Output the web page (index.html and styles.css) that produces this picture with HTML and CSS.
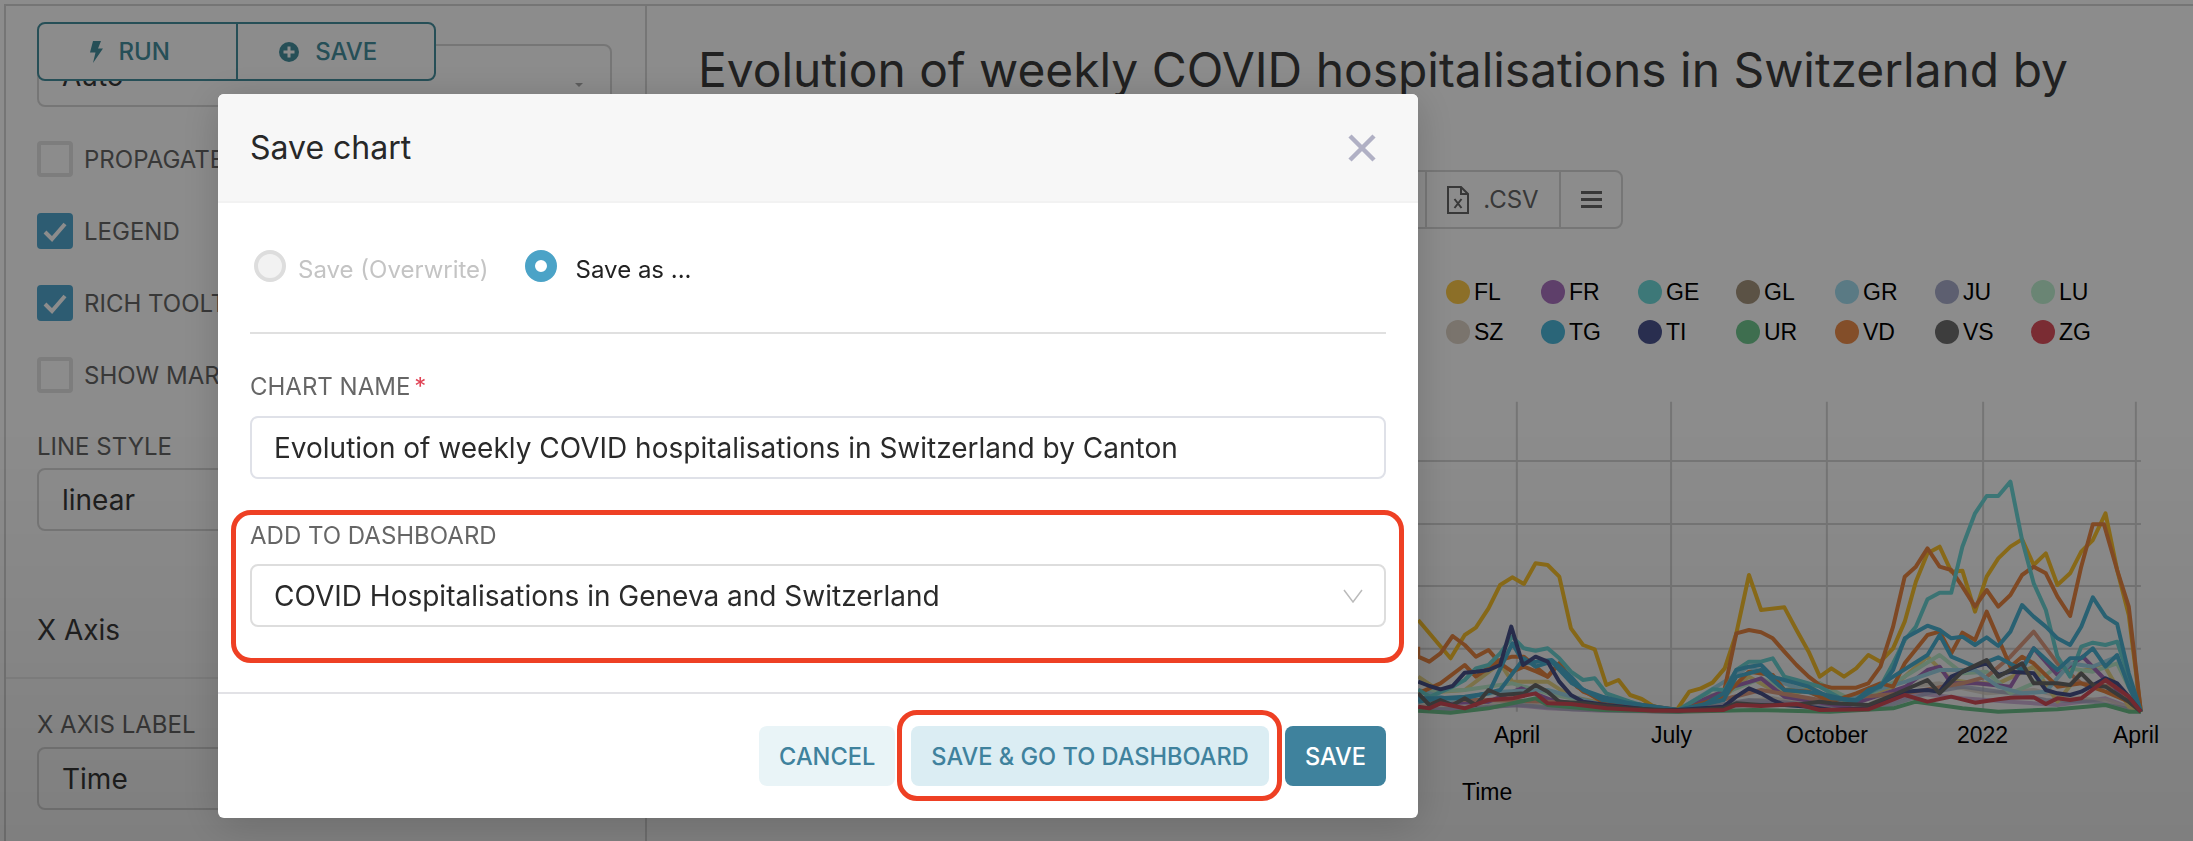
FILE: index.html
```html
<!DOCTYPE html>
<html lang="en">
<head>
    <meta charset="UTF-8">
    <meta name="viewport" content="width=device-width, initial-scale=1.0">
    <title>Save chart</title>
    <link rel="stylesheet" href="styles.css">
</head>
<body>
    <div class="page">
        <aside class="sidebar">
            <div class="run-bar">
                <button class="run-btn">
                    <svg class="bolt" width="13" height="22" viewBox="0 0 13 22"><path d="M3 0H11L8 7.500H13L3 22L5.500 11.500H0Z"/></svg>
                    RUN
                </button>
                <button class="run-btn">
                    <svg width="20" height="20" viewBox="0 0 20 20"><circle class="plus-disc" cx="10" cy="10" r="10"/><path class="plus-cross" d="M8.500 4.500h3v4h4v3h-4v4h-3v-4h-4v-3h4z"/></svg>
                    SAVE
                </button>
            </div>

            <div class="field field-under-bar">
                <span>Auto</span>
                <i class="caret"></i>
            </div>

            <div class="check-list">
                <div class="check-row"><i class="box"></i>PROPAGATE</div>
                <div class="check-row"><i class="box checked"><svg width="28" height="24" viewBox="0 0 28 24"><path d="M4 13L11 20L24 5"/></svg></i>LEGEND</div>
                <div class="check-row"><i class="box checked"><svg width="28" height="24" viewBox="0 0 28 24"><path d="M4 13L11 20L24 5"/></svg></i>RICH TOOLT</div>
                <div class="check-row"><i class="box"></i>SHOW MAR</div>
            </div>

            <div class="side-label side-label-line">LINE STYLE</div>
            <div class="field">linear</div>

            <h3 class="side-heading">X Axis</h3>
            <div class="panel-line"></div>

            <div class="side-label side-label-axis">X AXIS LABEL</div>
            <div class="field">Time</div>
        </aside>

        <main class="main">
            <h1 class="chart-title">Evolution of weekly COVID hospitalisations in Switzerland by Canton</h1>

            <div class="export-bar">
                <div class="export-cell export-hidden"></div>
                <div class="export-cell export-csv">
                    <svg width="22" height="28" viewBox="0 0 22 28"><path class="file-line" d="M1 1H14L21 8V27H1ZM14 1V8H21M7.500 13L14.500 22M14.500 13L7.500 22"/></svg>
                    .CSV
                </div>
                <div class="export-cell export-menu">
                    <i></i><i></i><i></i>
                </div>
            </div>

            <div class="legend">
                <div class="legend-item"><i class="dot" style="background:#ffcb49"></i>FL</div>
                <div class="legend-item"><i class="dot" style="background:#ab73c1"></i>FR</div>
                <div class="legend-item"><i class="dot" style="background:#6fdada"></i>GE</div>
                <div class="legend-item"><i class="dot" style="background:#a7957e"></i>GL</div>
                <div class="legend-item"><i class="dot" style="background:#a4def1"></i>GR</div>
                <div class="legend-item"><i class="dot" style="background:#a9aecc"></i>JU</div>
                <div class="legend-item"><i class="dot" style="background:#c1f3d3"></i>LU</div>
                <div class="legend-item"><i class="dot" style="background:#ded3c6"></i>SZ</div>
                <div class="legend-item"><i class="dot" style="background:#4eb8da"></i>TG</div>
                <div class="legend-item"><i class="dot" style="background:#4c5591"></i>TI</div>
                <div class="legend-item"><i class="dot" style="background:#72c891"></i>UR</div>
                <div class="legend-item"><i class="dot" style="background:#ee8e4c"></i>VD</div>
                <div class="legend-item"><i class="dot" style="background:#6f6f6f"></i>VS</div>
                <div class="legend-item"><i class="dot" style="background:#de505d"></i>ZG</div>
            </div>

            <svg class="chart" viewBox="0 0 1568 945" preserveAspectRatio="none">
                <g class="grid">
                    <path d="M231 5V935M536 5V935M844 5V935M1153 5V935M1455 5V935"/>
                    <path d="M0 183H1465M0 372H1465M0 558H1465M0 746H1465"/>
                </g>
                <g class="trace faint">
                    <polyline stroke="#c9a0d6" points="36,925 128,930 222,915 292,925 400,932 550,935 680,915 760,905 830,925 926,925 1020,880 1112,895 1207,905 1300,915 1395,895 1465,935"/>
                    <polyline stroke="#ded3c6" points="36,915 128,920 222,905 315,925 420,930 550,935 680,905 737,895 830,920 926,915 1000,860 1067,850 1160,880 1253,870 1325,895 1395,900 1465,935"/>
                    <polyline stroke="#a9aecc" points="36,930 128,925 240,915 340,928 550,935 690,900 780,910 860,925 950,925 1043,880 1112,860 1207,880 1277,900 1370,905 1465,935"/>
                </g>
                <g class="trace">
                    <polyline stroke="#f0dc8c" points="36,830 80,875 128,870 198,790 222,845 292,845 338,890 420,915 550,932 640,890 690,830 737,870 784,880 830,850 880,910 975,860 1043,770 1090,840 1137,850 1183,850 1253,800 1300,905 1347,815 1390,790 1441,920 1465,935"/>
                    <polyline stroke="#c1f3d3" points="36,875 128,870 222,850 292,880 400,915 550,930 595,890 640,880 714,835 760,870 830,850 900,905 998,830 1067,765 1112,820 1160,815 1207,880 1253,850 1300,800 1370,815 1418,790 1465,935"/>
                    <polyline stroke="#ab73c1" points="36,890 80,910 175,905 240,865 300,900 400,925 550,932 660,860 714,835 760,890 880,920 1000,860 1043,810 1067,800 1090,850 1140,850 1207,860 1253,745 1300,825 1350,770 1395,840 1441,900 1465,935"/>
                    <polyline stroke="#e8a488" points="36,900 175,900 292,905 550,933 714,870 830,900 1000,880 1112,850 1160,830 1207,770 1253,695 1300,790 1347,850 1418,860 1465,935"/>
                    <polyline stroke="#a4def1" points="36,870 100,900 198,875 292,870 400,915 550,930 690,800 760,850 860,905 1000,845 1067,810 1137,810 1183,860 1230,880 1277,875 1325,790 1370,800 1418,770 1465,935"/>
                    <polyline stroke="#ffc62e" points="36,660 100,775 128,705 150,683 175,625 198,555 222,532 245,552 268,490 292,495 315,530 338,685 362,735 385,748 408,855 432,840 455,885 478,897 500,918 525,928 548,928 572,875 595,865 618,848 642,805 665,700 690,525 714,630 760,622 784,690 808,755 830,830 853,805 878,830 902,805 926,765 950,785 975,745 998,665 1020,545 1043,460 1067,440 1090,515 1112,512 1137,635 1160,530 1183,475 1207,440 1230,418 1253,495 1277,460 1300,555 1325,520 1347,455 1370,420 1395,340 1418,510 1441,645 1465,935"/>
                    <polyline stroke="#f08a45" points="36,740 36,770 58,785 80,760 104,708 128,735 150,770 175,750 198,790 222,815 245,800 270,815 292,830 315,790 338,840 362,875 408,900 480,915 550,930 600,915 640,880 665,700 690,690 714,697 737,715 760,755 784,795 808,830 830,855 853,863 902,863 926,850 950,800 975,680 998,530 1020,500 1043,445 1067,500 1090,510 1112,560 1137,620 1160,570 1183,620 1207,585 1230,525 1253,500 1277,520 1300,590 1325,648 1347,500 1370,373 1392,373 1418,510 1441,620 1465,935"/>
                    <polyline stroke="#f08a45" points="36,880 80,850 128,795 150,830 198,780 222,770 245,770 292,830 315,790 350,860 400,905 480,920 550,932 640,890 690,815 737,825 760,870 808,875 853,905 902,880 950,850 975,860 998,790 1043,705 1067,695 1090,760 1112,698 1137,720 1160,635 1207,800 1230,770 1253,790 1300,860 1347,850 1395,875 1441,905 1465,935"/>
                    <polyline stroke="#6fdada" points="36,870 60,890 104,860 128,840 150,805 175,795 198,760 222,710 245,745 268,752 292,745 315,775 338,815 362,840 385,835 408,880 455,905 500,925 550,930 595,890 618,868 642,870 665,810 690,785 714,785 737,775 760,830 784,840 808,850 830,860 853,880 878,900 900,900 926,880 950,860 975,790 998,720 1020,680 1043,598 1067,578 1090,578 1112,440 1137,340 1160,288 1183,288 1207,245 1230,420 1253,550 1277,630 1300,770 1325,830 1347,740 1370,728 1395,735 1418,725 1441,830 1465,935"/>
                    <polyline stroke="#4eb8da" points="36,905 80,895 128,890 175,880 222,730 245,790 300,780 338,830 362,870 400,890 455,910 550,930 600,915 640,880 665,810 690,800 714,795 737,830 760,840 808,860 853,895 902,900 926,870 950,860 975,810 998,715 1043,677 1067,690 1090,715 1112,710 1137,735 1160,712 1183,738 1207,695 1230,615 1253,650 1277,680 1300,715 1325,735 1347,680 1370,592 1395,650 1418,672 1441,820 1465,935"/>
                    <polyline stroke="#4eb8da" points="36,895 128,895 198,870 245,775 268,800 300,785 340,850 400,900 550,930 640,900 665,830 714,810 760,870 830,880 900,905 975,830 1043,765 1067,705 1090,770 1137,800 1183,772 1230,810 1253,745 1300,810 1325,775 1347,775 1370,745 1395,800 1418,765 1441,860 1465,935"/>
                    <polyline stroke="#4c5591" points="36,845 58,858 80,868 104,858 128,818 150,815 175,810 198,795 220,680 243,795 268,770 292,785 315,845 338,885 362,905 408,915 500,930 550,930 640,920 665,890 690,865 714,880 737,900 760,915 808,920 853,930 926,925 975,890 998,875 1043,870 1067,875 1090,830 1137,800 1160,790 1183,825 1207,815 1253,820 1277,870 1300,880 1325,885 1347,875 1395,835 1418,850 1441,890 1465,935"/>
                    <polyline stroke="#72c891" points="36,932 100,938 175,925 268,895 292,915 400,930 550,935 700,930 850,935 975,925 1020,905 1112,925 1183,935 1300,928 1395,915 1441,935 1465,935"/>
                    <polyline stroke="#6f6f6f" points="36,880 58,915 80,900 104,915 128,895 150,915 175,870 198,885 245,880 268,855 292,875 315,905 362,910 450,925 550,932 640,925 665,910 714,915 780,915 830,905 853,910 926,915 975,885 1043,840 1067,880 1112,815 1160,780 1183,830 1230,790 1253,850 1300,850 1325,855 1347,820 1370,855 1395,860 1441,905 1465,935"/>
                    <polyline stroke="#de505d" points="36,920 58,925 80,910 128,925 175,900 222,895 268,880 292,910 338,912 408,925 500,932 550,932 640,930 665,915 714,918 784,912 830,930 926,928 998,885 1043,905 1090,890 1137,908 1183,898 1207,893 1253,892 1277,912 1300,895 1325,900 1347,895 1395,840 1441,890 1465,935"/>
                </g>
            </svg>

            <div class="axis-ticks">
                <span>April</span>
                <span>July</span>
                <span>October</span>
                <span>2022</span>
                <span>April</span>
            </div>
            <div class="axis-name">Time</div>
        </main>
    </div>

    <div class="overlay"></div>

    <div class="modal">
        <div class="modal-header">
            <h2>Save chart</h2>
            <svg class="modal-close" width="30" height="30" viewBox="0 0 30 30"><path d="M3 3L27 27M27 3L3 27"/></svg>
        </div>

        <div class="modal-body">
            <div class="radio-row">
                <label class="radio-label disabled"><i class="radio"></i>Save (Overwrite)</label>
                <label class="radio-label"><i class="radio on"></i>Save as ...</label>
            </div>
            <hr class="modal-line">

            <div class="form-label">CHART NAME<span class="required">*</span></div>
            <div class="form-input">Evolution of weekly COVID hospitalisations in Switzerland by Canton</div>

            <div class="form-group ringed">
                <div class="form-label">ADD TO DASHBOARD</div>
                <div class="form-input form-select">
                    COVID Hospitalisations in Geneva and Switzerland
                    <svg width="20" height="14" viewBox="0 0 20 14"><path d="M1 1L10 13L19 1"/></svg>
                </div>
            </div>
        </div>

        <div class="modal-footer">
            <button class="btn btn-cancel">CANCEL</button>
            <button class="btn btn-go ringed-btn">SAVE &amp; GO TO DASHBOARD</button>
            <button class="btn btn-save">SAVE</button>
        </div>
    </div>
</body>
</html>
```

FILE: styles.css
```css
* {
    box-sizing: border-box;
}

body {
    font-family: Inter, "Liberation Sans", sans-serif;
    background-color: #fff;
    margin: 0;
    height: 841px;
    overflow: hidden;
}

button {
    font-family: inherit;
}

.page {
    display: flex;
    height: 841px;
    margin: 4px 0 0 4px;
    border-top: 2px solid #d5d5d5;
    border-left: 2px solid #d5d5d5;
}

/* left panel */
.sidebar {
    flex: 0 0 641px;
    padding: 16px 33px 0 31px;
    border-right: 2px solid #d8d8d8;
}

.run-bar {
    position: relative;
    z-index: 1;
    display: flex;
    width: 399px;
    height: 59px;
    background-color: #fff;
    border: 2px solid #46909f;
    border-radius: 8px;
}

.run-btn {
    display: flex;
    align-items: center;
    justify-content: center;
    gap: 16px;
    flex: 1;
    padding: 0 15px 0 0;
    background: none;
    border: none;
    color: #46909f;
    font-size: 24px;
    font-weight: 500;
}

.run-btn + .run-btn {
    border-left: 2px solid #46909f;
}

.bolt path,
.plus-disc {
    fill: #46909f;
}

.plus-cross {
    fill: #fff;
}

.field {
    display: flex;
    align-items: center;
    height: 63px;
    padding-left: 23px;
    border: 2px solid #d8d8d8;
    border-radius: 8px;
    color: #383838;
    font-size: 28px;
}

.field-under-bar {
    position: relative;
    margin-top: -37px;
    padding-top: 0;
}

.caret {
    position: absolute;
    right: 27px;
    top: 37px;
    border-left: 4px solid transparent;
    border-right: 4px solid transparent;
    border-top: 4px solid #aaa;
}

.check-list {
    margin-top: 34px;
}

.check-row {
    display: flex;
    align-items: center;
    gap: 11px;
    height: 36px;
    margin-bottom: 36px;
    color: #666;
    font-size: 24px;
    white-space: nowrap;
}

.box {
    display: flex;
    flex: none;
    align-items: center;
    justify-content: center;
    width: 36px;
    height: 36px;
    border: 4px solid #e4e4e4;
    border-radius: 4px;
}

.box.checked {
    background-color: #53a8cf;
    border-color: #53a8cf;
}

.box path {
    fill: none;
    stroke: #fff;
    stroke-width: 4;
}

.side-label {
    height: 28px;
    line-height: 28px;
    color: #666;
    font-size: 24px;
}

.side-label-line {
    margin-top: 40px;
    margin-bottom: 7px;
}

.side-label-axis {
    margin-top: 32px;
    margin-bottom: 8px;
}

.side-heading {
    height: 40px;
    line-height: 40px;
    margin: 79px 0 27px;
    color: #3c3c3c;
    font-size: 28px;
    font-weight: 400;
}

.panel-line {
    height: 2px;
    margin: 0 -33px 0 -31px;
    background-color: #eee;
}

/* chart side */
.main {
    flex: 1;
    min-width: 0;
    padding: 34px 0 0 51px;
}

.chart-title {
    margin: 0;
    color: #3c3c3c;
    font-size: 47.900px;
    font-weight: 400;
    line-height: 60px;
}

.export-bar {
    display: flex;
    width: 323px;
    height: 59px;
    margin: 10px 0 0 602px;
    border: 2px solid #d8d8d8;
    border-radius: 8px;
    color: #666;
    font-size: 24px;
}

.export-cell {
    display: flex;
    align-items: center;
    justify-content: center;
    height: 100%;
}

.export-hidden {
    width: 123px;
}

.export-csv {
    gap: 14px;
    width: 136px;
    border-left: 2px solid #d8d8d8;
    border-right: 2px solid #d8d8d8;
}

.file-line {
    fill: none;
    stroke: #666;
    stroke-width: 2;
}

.export-menu {
    flex: 1;
    flex-direction: column;
    gap: 3.500px;
}

.export-menu i {
    width: 21px;
    height: 3.500px;
    background-color: #666;
}

.legend {
    display: grid;
    grid-template-columns: 95px 97px 98px 99px 100px 96px auto;
    grid-auto-rows: 40px;
    margin: 43px 0 0 748px;
    font-family: "Liberation Sans", sans-serif;
    font-size: 23px;
}

.legend-item {
    display: flex;
    align-items: center;
    gap: 4px;
    color: #000;
}

.dot {
    width: 24px;
    height: 24px;
    border-radius: 50%;
}

.chart {
    display: block;
    width: 793px;
    height: 315px;
    margin: 48px 0 0 702px;
}

.grid path {
    fill: none;
    stroke: #d6d6d6;
    stroke-width: 2px;
    vector-effect: non-scaling-stroke;
}

.trace polyline {
    fill: none;
    stroke-width: 4px;
    stroke-linejoin: round;
    vector-effect: non-scaling-stroke;
}

.trace.faint polyline {
    opacity: 0.7;
}

.axis-ticks {
    display: grid;
    grid-template-columns: 154px 155px 156px 155px 152px;
    height: 40px;
    margin-left: 742px;
    font-family: "Liberation Sans", sans-serif;
    font-size: 23px;
    line-height: 40px;
    text-align: center;
    color: #000;
}

.axis-name {
    height: 40px;
    margin: 17px 0 0 764px;
    font-family: "Liberation Sans", sans-serif;
    font-size: 23px;
    line-height: 40px;
    color: #000;
}

/* dialog */
.overlay {
    position: fixed;
    z-index: 2;
    inset: 0;
    background: linear-gradient(rgba(0, 0, 0, 0.45) 50%, rgba(0, 0, 0, 0.5));
}

.modal {
    position: fixed;
    z-index: 3;
    left: 218px;
    top: 94px;
    width: 1200px;
    height: 724px;
    background-color: #fff;
    border-radius: 6px;
    box-shadow: 0 6px 40px rgba(0, 0, 0, 0.18);
}

.modal-header {
    display: flex;
    align-items: center;
    justify-content: space-between;
    height: 109px;
    padding: 0 41px 0 32px;
    background-color: #f7f7f7;
    border-bottom: 2px solid #f2f2f2;
    border-radius: 6px 6px 0 0;
}

.modal-header h2 {
    margin: 0;
    color: #282828;
    font-size: 32px;
    font-weight: 400;
}

.modal-close path {
    fill: none;
    stroke: #b0b0c4;
    stroke-width: 4.500;
}

.modal-body {
    padding: 47px 32px 0;
}

.radio-row {
    display: flex;
    gap: 36px;
    height: 32px;
    padding-left: 4px;
}

.radio-label {
    display: flex;
    gap: 12px;
    color: #222;
    font-size: 24px;
    line-height: 40px;
}

.radio-label.disabled {
    color: #c4c4c4;
}

.radio {
    flex: none;
    width: 32px;
    height: 32px;
    border: 10px solid #4ba3c7;
    border-radius: 50%;
    background-color: #fff;
}

.radio-label + .radio-label .radio {
    margin-right: 7px;
}

.radio-label.disabled .radio {
    border: 4px solid #ddd;
    background-color: #f2f2f2;
}

.modal-line {
    height: 2px;
    margin: 50px 0 39px;
    border: none;
    background-color: #e0e0e0;
}

.form-label {
    height: 28px;
    line-height: 28px;
    color: #666;
    font-size: 24px;
}

.required {
    margin-left: 4px;
    color: #e04355;
}

.form-input {
    display: flex;
    align-items: center;
    justify-content: space-between;
    height: 63px;
    margin-top: 15px;
    padding: 0 21px 0 22px;
    border: 2px solid #dfe1e8;
    border-radius: 8px;
    color: #2a2a2a;
    font-size: 28px;
}

.form-group {
    position: relative;
    margin-top: 43px;
}

.form-group .form-input {
    margin-top: 14px;
}

.form-select {
    border-color: #ddd;
}

.form-select path {
    fill: none;
    stroke: #bbb;
    stroke-width: 1.500;
}

/* red annotation rings */
.ringed::after,
.ringed-btn::after {
    content: "";
    position: absolute;
    border: 5px solid #ee4024;
    border-radius: 20px;
    pointer-events: none;
}

.ringed::after {
    inset: -12px -18px -36px -19px;
}

.ringed-btn::after {
    inset: -16px -13px -15px -14px;
}

.modal-footer {
    display: flex;
    justify-content: flex-end;
    gap: 16px;
    margin-top: 65px;
    padding: 32px 32px 0;
    border-top: 2px solid #e2e2e6;
}

.btn {
    position: relative;
    height: 60px;
    padding: 0 20px;
    border: none;
    border-radius: 8px;
    color: #3f829d;
    font-size: 23.600px;
    font-weight: 500;
}

.btn-cancel {
    background-color: #e9f4f7;
}

.btn-go {
    background-color: #dbedf3;
}

.btn-save {
    background-color: #3f829d;
    color: #fff;
}
```
